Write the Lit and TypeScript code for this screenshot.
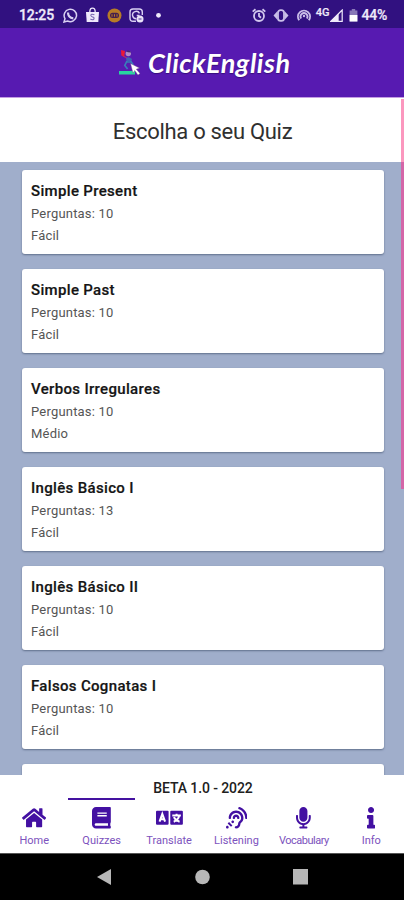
import { LitElement, html, css, svg } from "lit";
import { customElement } from "lit/decorators.js";
import { classMap } from "lit/directives/class-map.js";

const quizzes = [
  { name: "Simple Present", count: 10, level: "Fácil" },
  { name: "Simple Past", count: 10, level: "Fácil" },
  { name: "Verbos Irregulares", count: 10, level: "Médio" },
  { name: "Inglês Básico I", count: 13, level: "Fácil" },
  { name: "Inglês Básico II", count: 10, level: "Fácil" },
  { name: "Falsos Cognatas I", count: 10, level: "Fácil" },
];

const homeIcon = svg`<path d="M280.37 148.26L96 300.11V464a16 16 0 0 0 16 16l112.06-.29a16 16 0 0 0 15.92-16V368a16 16 0 0 1 16-16h64a16 16 0 0 1 16 16v95.64a16 16 0 0 0 16 16.05L464 480a16 16 0 0 0 16-16V300L295.67 148.26a12.19 12.19 0 0 0-15.3 0zM571.6 251.47L488 182.56V44.05a12 12 0 0 0-12-12h-56a12 12 0 0 0-12 12v72.61L318.47 43a48 48 0 0 0-61 0L4.34 251.47a12 12 0 0 0-1.6 16.9l25.5 31A12 12 0 0 0 45.15 301l235.22-193.74a12.19 12.19 0 0 1 15.3 0L530.9 301a12 12 0 0 0 16.9-1.6l25.5-31a12 12 0 0 0-1.7-16.93z"/>`;
const bookIcon = svg`<path d="M448 360V24c0-13.3-10.7-24-24-24H96C43 0 0 43 0 96v320c0 53 43 96 96 96h328c13.3 0 24-10.7 24-24v-16c0-7.5-3.5-14.3-8.9-18.7-4.2-15.4-4.2-59.3 0-74.7 5.4-4.3 8.9-11.1 8.9-18.6zM128 134c0-3.3 2.7-6 6-6h212c3.3 0 6 2.7 6 6v20c0 3.3-2.7 6-6 6H134c-3.3 0-6-2.7-6-6v-20zm0 64c0-3.3 2.7-6 6-6h212c3.3 0 6 2.7 6 6v20c0 3.3-2.7 6-6 6H134c-3.3 0-6-2.7-6-6v-20zm253.4 250H96c-17.7 0-32-14.3-32-32 0-17.6 14.4-32 32-32h285.4c-1.9 17.1-1.9 46.9 0 64z"/>`;
const languageIcon = svg`<rect x="0" y="88" width="300" height="336" rx="24"/><rect x="340" y="88" width="300" height="336" rx="24"/>
  <g fill="none" stroke="#fff" stroke-width="48"><path d="M84 350L150 168L216 350M108 290H192"/><path d="M388 204H592M490 160V204M422 350Q536 304 552 206M426 242Q466 322 562 350"/></g>`;
const listenIcon = svg`<path d="M216 260c0 15.464-12.536 28-28 28s-28-12.536-28-28c0-44.112 35.888-80 80-80s80 35.888 80 80c0 15.464-12.536 28-28 28s-28-12.536-28-28c0-13.234-10.767-24-24-24s-24 10.766-24 24zm24-176c-97.047 0-176 78.953-176 176 0 15.464 12.536 28 28 28s28-12.536 28-28c0-66.168 53.832-120 120-120s120 53.832 120 120c0 75.164-71.009 70.311-71.997 143.622L288 404c0 28.673-23.327 52-52 52-15.464 0-28 12.536-28 28s12.536 28 28 28c59.475 0 107.876-48.328 108-107.774.595-34.428 72-48.24 72-144.226 0-97.047-78.953-176-176-176zm-80 236c-17.673 0-32 14.327-32 32s14.327 32 32 32 32-14.327 32-32-14.327-32-32-32zM32 448c-17.673 0-32 14.327-32 32s14.327 32 32 32 32-14.327 32-32-14.327-32-32-32zm480-187.993c0-1.518-.012-3.025-.045-4.531C510.076 140.525 436.157 38.47 327.994 1.511c-14.633-4.998-30.549 2.809-35.55 17.442-5 14.633 2.81 30.549 17.442 35.55 85.906 29.354 144.61 110.513 146.077 201.953l.003.188c.026 1.118.033 2.236.033 3.363 0 15.464 12.536 28 28 28s28.001-12.536 28.001-28zM152.971 439.029l-80-80L39.03 392.97l80 80 33.941-33.941z"/>`;
const micIcon = svg`<path d="M176 352c53.02 0 96-42.98 96-96V96c0-53.02-42.98-96-96-96S80 42.98 80 96v160c0 53.02 42.98 96 96 96zm160-160h-16c-8.84 0-16 7.16-16 16v48c0 74.8-64.49 134.82-140.79 127.38C96.71 376.89 48 317.11 48 250.3V208c0-8.84-7.16-16-16-16H16c-8.84 0-16 7.16-16 16v40.16c0 89.64 63.97 169.55 152 181.69V464H96c-8.84 0-16 7.16-16 16v16c0 8.84 7.16 16 16 16h160c8.84 0 16-7.16 16-16v-16c0-8.84-7.16-16-16-16h-56v-33.77C285.71 418.47 352 344.9 352 256v-48c0-8.84-7.16-16-16-16z"/>`;
const infoIcon = svg`<path d="M20 424.229h20V279.771H20c-11.046 0-20-8.954-20-20V212c0-11.046 8.954-20 20-20h112c11.046 0 20 8.954 20 20v212.229h20c11.046 0 20 8.954 20 20V492c0 11.046-8.954 20-20 20H20c-11.046 0-20-8.954-20-20v-47.771c0-11.046 8.954-20 20-20zM96 0C56.235 0 24 32.235 24 72s32.235 72 72 72 72-32.235 72-72S135.764 0 96 0z"/>`;

const tabs = [
  { label: "Home", width: 576, icon: homeIcon },
  { label: "Quizzes", width: 448, icon: bookIcon, active: true },
  { label: "Translate", width: 640, icon: languageIcon },
  { label: "Listening", width: 512, icon: listenIcon },
  { label: "Vocabulary", width: 352, icon: micIcon, tight: true },
  { label: "Info", width: 192, icon: infoIcon },
];

@customElement("status-bar")
class StatusBar extends LitElement {
  static styles = css`
    :host { display: flex; align-items: center; height: 28px; padding: 2px 17px 0 19px; box-sizing: border-box;
      background: #311180; color: #eeeafa; font: 500 14px/20px Roboto, sans-serif; }
    svg { display: block; flex: none; }
    .clock { width: 44px; letter-spacing: -0.1px; -webkit-text-stroke: 0.3px; }
    .left, .right { display: flex; align-items: center; }
    .left { gap: 7px; }
    .right { margin-left: auto; }
    .alarm { margin-right: 7px; }
    .eye { margin-right: 8px; }
    .cast { margin-right: 5px; }
    .net { font-size: 11px; line-height: 12px; align-self: flex-start; margin: 2px 1px 0 0; -webkit-text-stroke: 0.2px; }
    .signal { margin-right: 6px; }
    .battery { margin-right: 3px; }
    .pct { letter-spacing: -0.2px; -webkit-text-stroke: 0.2px; }
  `;
  render() {
    return html`
      <span class="clock">12:25</span>
      <div class="left">
        <svg width="15" height="15" viewBox="0 0 15 15" fill="none" stroke="#d9d0f2" stroke-width="1.5"><path d="M1 14L2 10.6A6.2 6.2 0 1 1 4.6 13Z"/><path d="M5 4.6Q5 9.8 10.3 10.4" stroke-width="2.2"/></svg>
        <svg width="15" height="16" viewBox="0 0 15 16"><path d="M1 5H14L13.3 15H1.7Z" fill="#eee8fb"/><path d="M4.8 5Q4.8 1.2 7.5 1.2T10.2 5" fill="none" stroke="#eee8fb" stroke-width="1.3"/><path d="M9.4 7.8Q6 6.3 5.8 8.5Q6 9.8 8 10.1Q9.5 10.6 8.9 12Q7.4 13.4 5.4 12" fill="none" stroke="#7866b0" stroke-width="1.1"/></svg>
        <svg width="15" height="15" viewBox="0 0 15 15"><circle cx="7.5" cy="7.5" r="7" fill="#b77b27"/><rect x="3" y="4.8" width="9" height="5.3" rx="2.5" fill="#46204d"/><path d="M5 6.2V8.7M7.5 6.2V8.7M10 6.2V8.7" stroke="#b77b27"/></svg>
        <svg width="15" height="15" viewBox="0 0 15 15" fill="none" stroke="#d9d0f2" stroke-width="1.4"><path d="M13.3 7V4Q13.3 1 10.3 1H4Q1 1 1 4V10Q1 13.3 4 13.3H7"/><path d="M10.5 5.4A3.7 3.7 0 1 0 7.3 10.8M7.7 7.5H10.5"/><circle cx="11" cy="11" r="3.5" fill="#e9e3f8" stroke="none"/><path d="M9.5 11H12.5" stroke="#725caf"/></svg>
        <svg width="15" height="15" viewBox="0 0 15 15"><circle cx="7.5" cy="7.3" r="2.4" fill="#eeeafa"/></svg>
      </div>
      <div class="right">
        <svg class="alarm" width="14" height="15" viewBox="0 0 14 15" fill="none" stroke="#d2c8ed" stroke-width="1.8"><circle cx="7" cy="8" r="5"/><path d="M.7 3.6L3.5 1.3M13.3 3.6L10.5 1.3M7 5V8L9 9.7"/></svg>
        <svg class="eye" width="16" height="13" viewBox="0 0 16 13"><path d="M.5 6.5L4.5 2V11ZM15.5 6.5L11.5 2V11Z" fill="#c9bee8"/><rect x="5" y="1.2" width="6" height="10.6" rx="2.6" fill="none" stroke="#c9bee8" stroke-width="1.8"/></svg>
        <svg class="cast" width="14" height="14" viewBox="0 0 14 14" fill="none" stroke="#c9bee8" stroke-width="1.9"><path d="M2.2 12.2A6 6 0 1 1 11.8 12.2M4.2 10.5A3.4 3.4 0 1 1 9.8 10.5"/><circle cx="7" cy="8" r="1.2" fill="#c9bee8" stroke="none"/></svg>
        <span class="net">4G</span>
        <svg class="signal" width="13" height="13" viewBox="0 0 13 13"><path d="M.8 12.3H12.2V1Z" fill="#33127f" stroke="#eeeafa" stroke-width="1.2"/><path d="M.5 12.5H8.7V4.6Z" fill="#eeeafa"/></svg>
        <svg class="battery" width="9" height="13" viewBox="0 0 9 13"><path d="M2.8 0H6.2V1.5H8.4V12.5H.6V1.5H2.8Z" fill="#8878b7"/><path d="M.6 6H8.4V12.5H.6Z" fill="#fff"/></svg>
        <span class="pct">44%</span>
      </div>`;
  }
}

@customElement("brand-header")
class BrandHeader extends LitElement {
  static styles = css`
    :host { display: flex; height: 70px; box-sizing: border-box; align-items: center; padding-left: 118px;
      background: #571ab1; border-bottom: 1px solid #c49ee2; }
    svg { display: block; flex: none; }
    .name { margin: 1px 0 0 7px; color: #fff; font: italic 700 27px/36px Lato, sans-serif; letter-spacing: 0.5px;
      white-space: nowrap; text-shadow: 0 1px 1px #37107d; }
  `;
  render() {
    return html`
      <svg width="23" height="28" viewBox="0 0 23 28">
        <path d="M3 1L7 2L6.2 8L3.3 6.6Z" fill="#eb1837"/><path d="M5 7L9 9" stroke="#b82c68" stroke-width="1.2"/>
        <circle cx="10.3" cy="4.6" r="2.7" fill="#b18bc7"/><path d="M8 2.3Q11 0 13.3 3.6L10 3.3Z" fill="#452671"/>
        <path d="M8 9Q11 7.3 14 10L12.7 14H9Z" fill="#3e62b6"/>
        <path d="M9 12L6.8 16.5L9.6 20M12.5 12L15.3 16" fill="none" stroke="#397eb9" stroke-width="1.7"/>
        <rect x="1" y="22" width="16" height="3.5" fill="#28d5a0"/>
        <path d="M12.5 14.5L21.5 19L18.3 20.2L22 24.5L20 26L16.7 21.6L15 24Z" fill="#fff" stroke="#6d5287" stroke-width=".4"/>
      </svg>
      <span class="name">ClickEnglish</span>`;
  }
}

@customElement("quiz-card")
class QuizCard extends LitElement {
  static properties = { quiz: { attribute: false } };
  declare quiz?: { name: string; count: number; level: string };
  static styles = css`
    :host { display: block; flex: none; height: 84px; box-sizing: border-box; padding: 10px 10px 0 9px; border-radius: 3px;
      background: #fff; box-shadow: 0 1px 2px #60708c; font-family: Roboto, sans-serif; }
    .name { font-weight: 500; font-size: 15px; line-height: 23px; color: #151515; letter-spacing: 0.33px; -webkit-text-stroke: 0.2px; }
    .line { font-size: 13px; line-height: 22px; color: #555; letter-spacing: 0.2px; }
  `;
  render() {
    if (!this.quiz) return null;
    return html`<div class="name">${this.quiz.name}</div>
      <div class="line">Perguntas: ${this.quiz.count}</div>
      <div class="line">${this.quiz.level}</div>`;
  }
}

@customElement("tab-bar")
class TabBar extends LitElement {
  static styles = css`
    :host { display: grid; grid-template-columns: repeat(6, 67.4px); height: 55px; box-sizing: border-box; }
    .tab { display: flex; flex-direction: column; align-items: center; border-top: 2px solid transparent;
      color: #7c52bd; font: 400 11px/14px Roboto, sans-serif; letter-spacing: 0; padding-top: 7px; box-sizing: border-box; }
    .active { border-top-color: #4412a0; }
    .tight { letter-spacing: -0.5px; }
    .glyph { display: block; flex: none; height: 21.5px; fill: #4310a2; margin-bottom: 5.5px; }
  `;
  render() {
    return tabs.map((t) => html`
      <div class=${classMap({ tab: true, active: !!t.active, tight: !!t.tight })}>
        <svg class="glyph" width=${(t.width * 21.5) / 512} height="21.5" viewBox="0 0 ${t.width} 512">${t.icon}</svg>
        <span>${t.label}</span>
      </div>`);
  }
}

@customElement("app-root")
class AppRoot extends LitElement {
  static styles = css`
    :host { display: flex; flex-direction: column; position: relative; width: 404px; height: 900px; overflow: hidden;
      background: #fff; font-family: Roboto, sans-serif; }
    .title { margin: 0; height: 64px; flex: none; text-align: center; font: 400 22px/67px Roboto, sans-serif; color: #303030;
      letter-spacing: -0.3px; padding-left: 1px; }
    .list { flex: 1; min-height: 0; overflow: hidden; display: flex; flex-direction: column; gap: 15px;
      padding: 8px 20px 0 22px; background: #a0aecb; }
    .version { height: 23px; flex: none; text-align: center; font-weight: 500; font-size: 14px; line-height: 26px; color: #202020;
      letter-spacing: -0.1px; padding-left: 2px; }
    tab-bar { padding-left: 0.6px; }
    .system { height: 46px; flex: none; display: flex; align-items: center; justify-content: center; gap: 83px;
      background: #000; border-top: 1px solid #555; box-sizing: content-box; }
    .scroll { position: absolute; right: 0; top: 99px; width: 3px; height: 390px; background: #d466a8; }
    .scroll::before { content: ""; display: block; height: 63px; background: #fb97be; }
  `;
  render() {
    return html`
      <status-bar></status-bar>
      <brand-header></brand-header>
      <h1 class="title">Escolha o seu Quiz</h1>
      <main class="list">${quizzes.map((q) => html`<quiz-card .quiz=${q}></quiz-card>`)}<quiz-card></quiz-card></main>
      <div class="version">BETA 1.0 - 2022</div>
      <tab-bar></tab-bar>
      <nav class="system">
        <svg width="15" height="18" viewBox="0 0 15 18"><path d="M0 9L14 1V17Z" fill="#b7b7b7"/></svg>
        <svg width="15" height="16" viewBox="0 0 15 16"><circle cx="7.5" cy="8" r="7.3" fill="#b7b7b7"/></svg>
        <svg width="15" height="16" viewBox="0 0 15 16"><rect width="15" height="15.5" fill="#b7b7b7"/></svg>
      </nav>
      <div class="scroll"></div>`;
  }
}
